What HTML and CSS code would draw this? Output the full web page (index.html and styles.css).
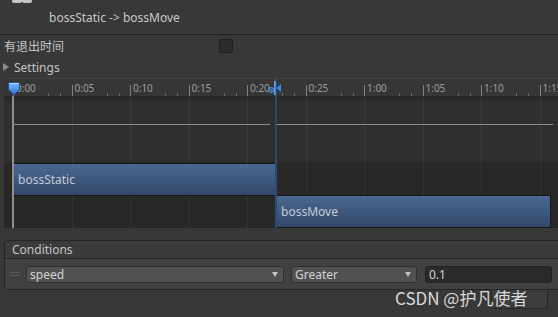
FILE: index.html
```html
<!DOCTYPE html>
<html>
<head>
<meta charset="utf-8">
<link rel="stylesheet" href="styles.css">
</head>
<body>
<header class="header">
  <div class="header-icon"><span></span></div>
  <div class="title">bossStatic -&gt; bossMove</div>
</header>
<div class="field-row">
  <span class="field-label">有退出时间</span>
  <span class="checkbox"></span>
</div>
<div class="foldout"><span class="fold-arrow"></span><span>Settings</span></div>
<div class="timeline">
  <div class="ruler">
    <div class="tick-cell"><span class="tick-label">0:00</span></div>
    <div class="tick-cell"><span class="tick-label">0:05</span></div>
    <div class="tick-cell"><span class="tick-label">0:10</span></div>
    <div class="tick-cell"><span class="tick-label">0:15</span></div>
    <div class="tick-cell"><span class="tick-label">0:20</span></div>
    <div class="tick-cell"><span class="tick-label">0:25</span></div>
    <div class="tick-cell"><span class="tick-label">1:00</span></div>
    <div class="tick-cell"><span class="tick-label">1:05</span></div>
    <div class="tick-cell"><span class="tick-label">1:10</span></div>
    <div class="tick-cell"><span class="tick-label">1:15</span></div>
  </div>
  <div class="tl-body">
    <div class="curve-area">
      <span class="seg seg-a"></span><span class="seg seg-b"></span>
    </div>
    <div class="track track-a"><div class="clip clip-a">bossStatic</div></div>
    <div class="track track-b"><div class="clip clip-b">bossMove</div></div>
    <div class="grid">
      <span></span><span></span><span></span><span></span><span></span>
      <span></span><span></span><span></span><span></span><span></span>
    </div>
  </div>
  <div class="playhead"></div>
  <svg class="playhead-marker" width="12" height="14" viewBox="0 0 12 14">
    <defs>
      <linearGradient id="pg" x1="0" y1="0" x2="0" y2="1">
        <stop offset="0" stop-color="#7cbcff"/>
        <stop offset="1" stop-color="#2a72dc"/>
      </linearGradient>
    </defs>
    <path d="M1.8 0.5 H10.2 Q11.5 0.5 11.5 1.8 V7.2 L6 13.2 L0.5 7.2 V1.8 Q0.5 0.5 1.8 0.5 Z" fill="url(#pg)" stroke="#1d4f9e" stroke-width="1"/>
    <path d="M1.5 1.5 H10.5" stroke="#b8dcff" stroke-width="1"/>
  </svg>
  <div class="end-line"></div>
  <svg class="end-marker" width="14" height="16" viewBox="0 0 14 16">
    <circle cx="3" cy="10" r="2.3" fill="none" stroke="#4b8fe0" stroke-width="1.2"/>
    <circle cx="3" cy="10" r="0.9" fill="#4b8fe0"/>
    <rect x="6" y="1" width="1.6" height="14" fill="#5aa8ff"/>
    <path d="M13 4 L8.3 8 L13 12 Z" fill="#3a88ea"/>
  </svg>
</div>
<div class="conditions">
  <div class="cond-header">Conditions</div>
  <div class="cond-body">
    <span class="handle"></span>
    <div class="dropdown dd-param"><span>speed</span><span class="dd-arrow"></span></div>
    <div class="dropdown dd-mode"><span>Greater</span><span class="dd-arrow"></span></div>
    <div class="value-field">0.1</div>
  </div>
</div>
<div class="list-footer"></div>
<div class="watermark">CSDN @护凡使者</div>
</body>
</html>
```

FILE: styles.css
```css
* { box-sizing: border-box; }
html, body { margin: 0; padding: 0; }
body {
  width: 558px;
  height: 317px;
  overflow: hidden;
  position: relative;
  background: #383838;
  font-family: "Noto Sans", "Noto Sans CJK SC", sans-serif;
  font-size: 12px;
  color: #c4c4c4;
}

.header {
  position: relative;
  height: 35px;
  border-bottom: 1px solid #222222;
  display: flex;
  align-items: center;
  padding-left: 49px;
}
.header-icon {
  position: absolute;
  left: 12px;
  top: -17px;
  width: 20px;
  height: 20px;
  background: #c4c4c4;
  border-radius: 2px;
}
.header-icon span {
  position: absolute;
  left: 9px;
  bottom: 0;
  width: 2px;
  height: 1px;
  background: #444444;
}
.title { color: #c8c8c8; }

.field-row {
  margin-top: 2px;
  height: 18px;
  display: flex;
  align-items: center;
  padding-left: 4px;
}
.field-label { width: 215px; }
.checkbox {
  width: 14px;
  height: 14px;
  background: #2b2b2b;
  border: 1px solid #202020;
  border-radius: 2px;
}

.foldout {
  margin-top: 3px;
  height: 18px;
  display: flex;
  align-items: center;
  padding-left: 3px;
}
.fold-arrow {
  width: 0;
  height: 0;
  border-left: 6px solid #8a8a8a;
  border-top: 4px solid transparent;
  border-bottom: 4px solid transparent;
  margin-right: 5px;
}

.timeline {
  position: relative;
  margin-top: 2px;
  margin-left: 4px;
  height: 150px;
  overflow: hidden;
  background: #2f2f2f;
}
.ruler {
  height: 18px;
  display: flex;
  padding-left: 9px;
  background: #363636;
  border-top: 1px solid #414141;
}
.tick-cell {
  flex: 0 0 58.5px;
  position: relative;
  background:
    linear-gradient(#808080, #808080) 0 100% / 1px 11px no-repeat,
    linear-gradient(#6c6c6c, #6c6c6c) 35px 100% / 1px 3px no-repeat,
    linear-gradient(#6c6c6c, #6c6c6c) 47px 100% / 1px 3px no-repeat;
}
.tick-label {
  position: absolute;
  left: 3px;
  top: 3px;
  font-size: 10px;
  line-height: 12px;
  color: #9c9c9c;
}

.tl-body {
  position: relative;
  height: 132px;
}
.curve-area {
  height: 66px;
  display: flex;
  align-items: flex-start;
  padding-top: 28px;
  background: linear-gradient(#262626, #2f2f2f 6px, #2f2f2f);
}
.seg {
  height: 1px;
  background: #8c8c8c;
  position: relative;
  z-index: 2;
}
.seg-a { margin-left: 9px; width: 257px; }
.seg-b { margin-left: 7px; width: 276px; }

.track {
  height: 33px;
  background: #282828;
}
.clip {
  position: relative;
  z-index: 2;
  height: 33px;
  border: 1px solid #161616;
  background: linear-gradient(#4b6892, #31486a);
  color: #c3cad6;
  display: flex;
  align-items: center;
  padding-left: 4px;
}
.clip-a { margin-left: 9px; width: 263px; top: 1px; }
.clip-b { margin-left: 272px; width: 275px; }

.grid {
  position: absolute;
  left: 0;
  top: 0;
  right: 0;
  bottom: 0;
  display: flex;
  padding-left: 9px;
  z-index: 1;
  pointer-events: none;
}
.grid span {
  flex: 0 0 58.5px;
  border-left: 1px solid rgba(255, 255, 255, 0.06);
}

.playhead {
  position: absolute;
  left: 8px;
  top: 18px;
  width: 2px;
  height: 132px;
  background: #8e8e8e;
  z-index: 3;
}
.playhead-marker {
  position: absolute;
  left: 4px;
  top: 4px;
  z-index: 4;
}
.end-line {
  position: absolute;
  left: 271px;
  top: 0;
  width: 2px;
  height: 150px;
  background: #2a4a78;
  z-index: 3;
}
.end-marker {
  position: absolute;
  left: 264px;
  top: 2px;
  z-index: 4;
}

.conditions {
  margin-top: 12px;
  margin-left: 4px;
  width: 570px;
  border: 1px solid #262626;
  border-radius: 3px;
}
.cond-header {
  height: 18px;
  background: #3b3b3b;
  border-bottom: 1px solid #262626;
  padding-left: 7px;
  display: flex;
  align-items: center;
}
.cond-body {
  height: 30px;
  background: #414141;
  display: flex;
  align-items: flex-start;
  padding-top: 7px;
}
.handle {
  width: 10px;
  height: 4px;
  margin-left: 5px;
  margin-top: 6px;
  border-top: 1px solid #5c5c5c;
  border-bottom: 1px solid #5c5c5c;
}
.dropdown {
  height: 17px;
  background: #515151;
  border: 1px solid #303030;
  border-radius: 3px;
  display: flex;
  align-items: center;
  justify-content: space-between;
  padding: 0 5px 0 3px;
  color: #d2d2d2;
}
.dd-param { margin-left: 6px; width: 258px; }
.dd-mode { margin-left: 7px; width: 126px; }
.dd-arrow {
  width: 0;
  height: 0;
  border-top: 5px solid #c4c4c4;
  border-left: 3.5px solid transparent;
  border-right: 3.5px solid transparent;
}
.value-field {
  margin-left: 8px;
  width: 127px;
  height: 17px;
  background: #2a2a2a;
  border: 1px solid #212121;
  border-radius: 3px;
  padding-left: 3px;
  display: flex;
  align-items: center;
  color: #d2d2d2;
}
.list-footer {
  margin-left: 491px;
  width: 57px;
  height: 19px;
  background: #3d3d3d;
  border: 1px solid #262626;
  border-top: none;
  border-radius: 0 0 3px 3px;
}

.watermark {
  position: absolute;
  left: 395px;
  top: 285px;
  font-family: "Noto Sans CJK SC", sans-serif;
  font-size: 17px;
  color: rgba(255, 255, 255, 0.82);
  white-space: nowrap;
  z-index: 10;
}
```
